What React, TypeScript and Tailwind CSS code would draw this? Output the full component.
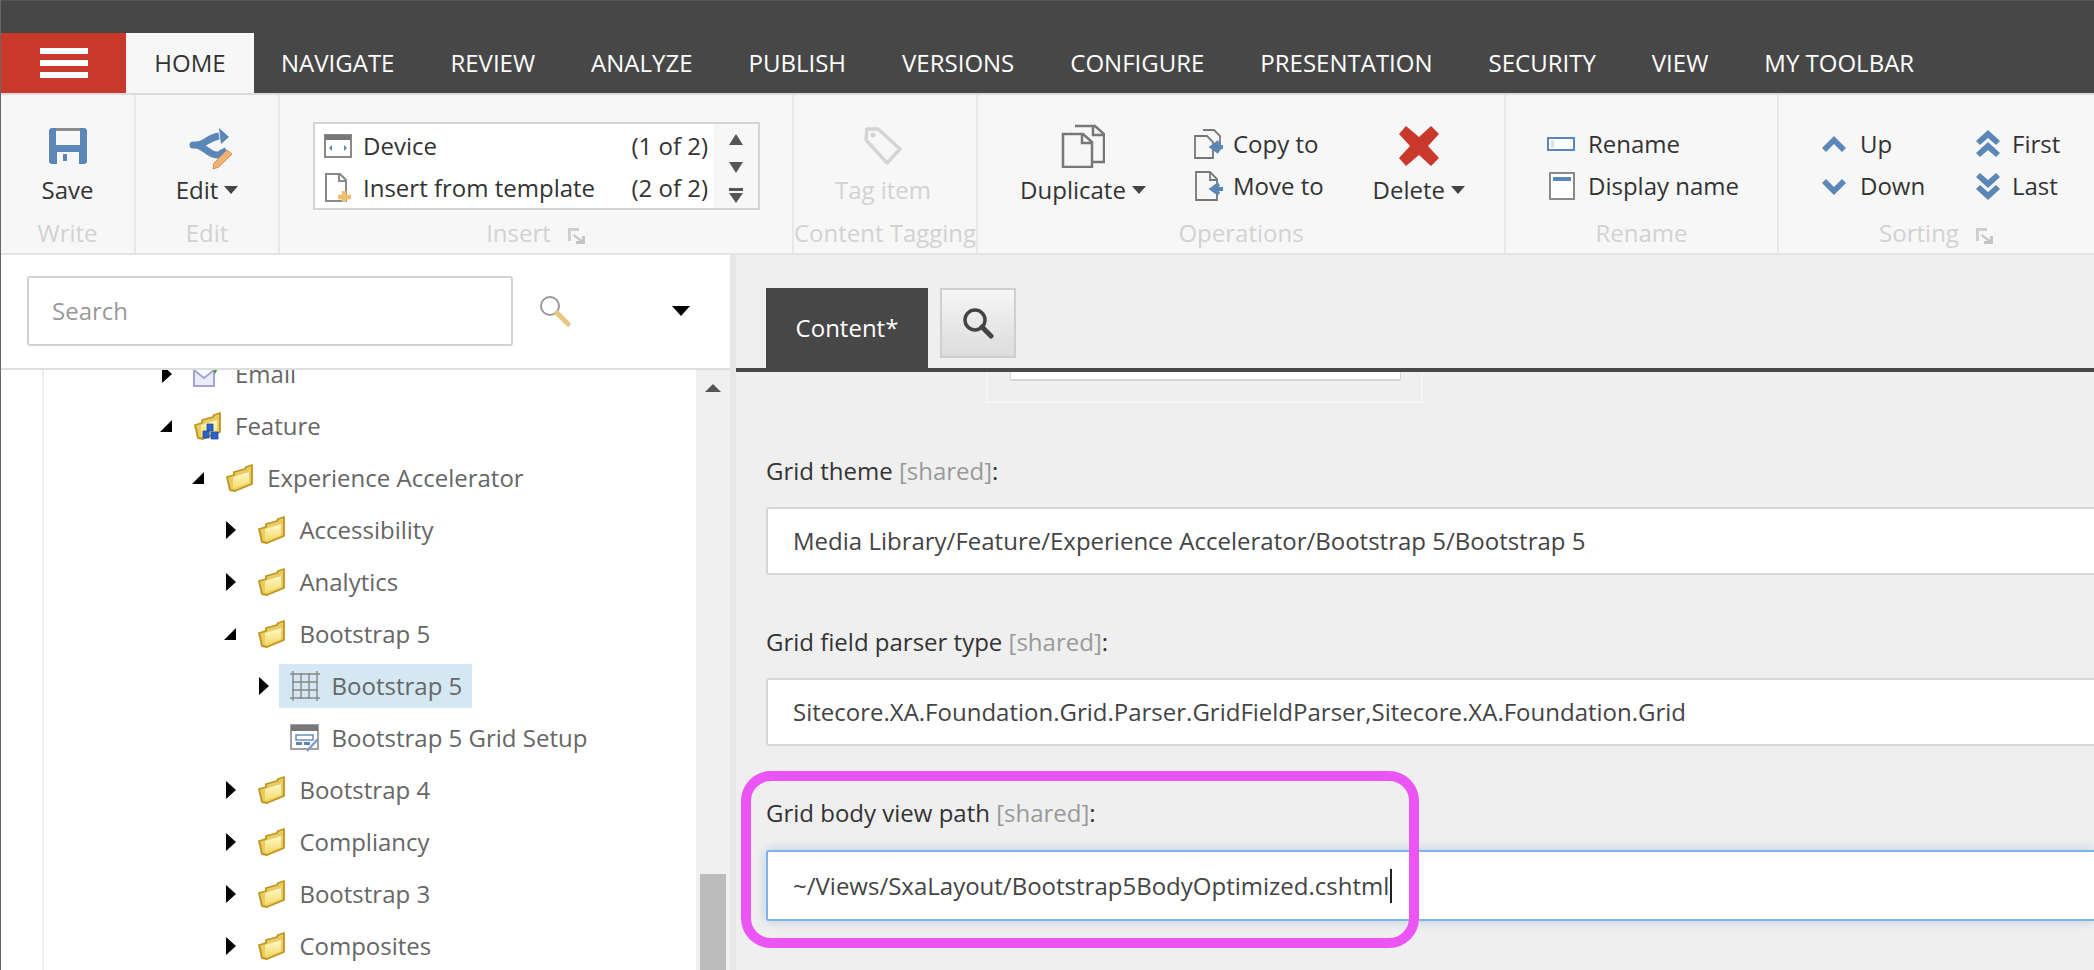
import type { ReactNode } from 'react';

const TABS = ['NAVIGATE', 'REVIEW', 'ANALYZE', 'PUBLISH', 'VERSIONS', 'CONFIGURE', 'PRESENTATION', 'SECURITY', 'VIEW', 'MY TOOLBAR'];

type TreeRow = { label: string; level: number; arrow?: 'open' | 'closed'; icon: 'folder' | 'feature' | 'email' | 'grid' | 'setup'; selected?: boolean };

const TREE: TreeRow[] = [
  { label: 'Email', level: 0, arrow: 'closed', icon: 'email' },
  { label: 'Feature', level: 0, arrow: 'open', icon: 'feature' },
  { label: 'Experience Accelerator', level: 1, arrow: 'open', icon: 'folder' },
  { label: 'Accessibility', level: 2, arrow: 'closed', icon: 'folder' },
  { label: 'Analytics', level: 2, arrow: 'closed', icon: 'folder' },
  { label: 'Bootstrap 5', level: 2, arrow: 'open', icon: 'folder' },
  { label: 'Bootstrap 5', level: 3, arrow: 'closed', icon: 'grid', selected: true },
  { label: 'Bootstrap 5 Grid Setup', level: 3, icon: 'setup' },
  { label: 'Bootstrap 4', level: 2, arrow: 'closed', icon: 'folder' },
  { label: 'Compliancy', level: 2, arrow: 'closed', icon: 'folder' },
  { label: 'Bootstrap 3', level: 2, arrow: 'closed', icon: 'folder' },
  { label: 'Composites', level: 2, arrow: 'closed', icon: 'folder' },
];

function Caret() {
  return <span className="inline-block ml-[6px] w-0 h-0 border-x-[7px] border-x-transparent border-t-[8px] border-t-[#444] align-middle" />;
}

function Launcher() {
  return (
    <svg width="18" height="16" viewBox="0 0 18 16" className="ml-[17px] mt-[6px]">
      <path d="M0 0h11v3H3v10H0z" fill="#cfcfcf" />
      <path d="M6 6l8 6V8h3v8H8v-3h4L5 8z" fill="#c4c4c4" />
    </svg>
  );
}

function Group({ width, label, launcher, children, grow }: { width?: string; label: string; launcher?: boolean; children: ReactNode; grow?: boolean }) {
  return (
    <div className={`${width ?? ''} ${grow ? 'flex-1' : 'shrink-0 border-r-2 border-[#e8e8e8]'} h-full flex flex-col overflow-hidden`}>
      <div className="h-[118px] relative flex">{children}</div>
      <div className="h-[40px] flex items-center justify-center text-[#d2d2d2] whitespace-nowrap">
        {label}
        {launcher && <Launcher />}
      </div>
    </div>
  );
}

function BigButton({ icon, label, caret, muted }: { icon: ReactNode; label: string; caret?: boolean; muted?: boolean }) {
  return (
    <div className="flex flex-col items-center pt-[26px]">
      <div className="h-[50px] flex items-center justify-center">{icon}</div>
      <div className={`h-[38px] flex items-center whitespace-nowrap ${muted ? 'text-[#d2d2d2]' : 'text-[#333]'}`}>
        {label}
        {caret && <Caret />}
      </div>
    </div>
  );
}

function SmallRow({ icon, label, iconWidth }: { icon: ReactNode; label: string; iconWidth: string }) {
  return (
    <div className="h-[42px] flex items-center whitespace-nowrap text-[#333]">
      <div className={`${iconWidth} flex items-center shrink-0`}>{icon}</div>
      {label}
    </div>
  );
}

function Folder({ children }: { children?: ReactNode }) {
  return (
    <svg width="29" height="28" viewBox="0 0 29 28">
      <defs>
        <linearGradient id="folder-front" x1="0" y1="0" x2="0" y2="1">
          <stop offset="0" stopColor="#fff8cf" />
          <stop offset="1" stopColor="#f4dc62" />
        </linearGradient>
      </defs>
      <path d="M2 13l7-2V8l11-3 1-2 6-2v19L10 27l-5-1z" fill="#e9cb62" stroke="#bf9420" strokeWidth="1.800" strokeLinejoin="round" />
      <path d="M8 13l16-5v11L8 25z" fill="url(#folder-front)" />
      {children}
    </svg>
  );
}

function TreeIcon({ name }: { name: TreeRow['icon'] }) {
  if (name === 'folder') return <Folder />;
  if (name === 'feature') {
    return (
      <Folder>
        <path d="M14 12h6v7h-6zM10 19h6v7h-6zM18 20h7v7h-7z" fill="#2a62c8" stroke="#1c4aa5" strokeWidth="0.800" />
      </Folder>
    );
  }
  if (name === 'email') {
    return (
      <svg width="28" height="28" viewBox="0 0 28 28">
        <path d="M1 7l10-5 10 5v19H1z" fill="#ecebfa" stroke="#a5a2d8" strokeWidth="2" />
        <path d="M1 10l10 8 10-8" fill="#f8f8ff" stroke="#a5a2d8" strokeWidth="1.800" />
        <path d="M20 10l6-8 2 2-6 10z" fill="#4f9a3c" />
      </svg>
    );
  }
  if (name === 'grid') {
    return (
      <svg width="30" height="30" viewBox="0 0 30 30" fill="none" stroke="#868686" strokeWidth="1.400">
        <path d="M3 0v30M11 2v26M19 2v26M27 0v30M0 3h30M2 11h26M2 19h26M0 27h30" />
      </svg>
    );
  }
  return (
    <svg width="30" height="28" viewBox="0 0 30 28">
      <rect x="1" y="1" width="27" height="24" fill="#fff" stroke="#8a8a8a" strokeWidth="1.600" />
      <rect x="1" y="1" width="27" height="6" fill="#777" />
      <rect x="6" y="11" width="17" height="5" fill="#fff" stroke="#5b86b8" strokeWidth="1.400" />
      <rect x="6" y="18" width="6" height="3" fill="#5b86b8" />
      <rect x="14" y="18" width="6" height="3" fill="#5b86b8" />
      <path d="M17 27l11-12" stroke="#7d9dc9" strokeWidth="2.400" />
    </svg>
  );
}

function TreeItem({ row }: { row: TreeRow }) {
  const inner = (
    <>
      <div className="w-[42px] shrink-0 flex items-center"><TreeIcon name={row.icon} /></div>
      <span>{row.label}</span>
    </>
  );
  return (
    <div className="h-[52px] flex items-center whitespace-nowrap" style={{ paddingLeft: 159 + row.level * 32.2 }}>
      <div className="w-[33px] shrink-0 flex items-center">
        {row.arrow === 'open' && <div className="w-0 h-0 border-l-[12px] border-l-transparent border-b-[12px] border-b-black" />}
        {row.arrow === 'closed' && <div className="ml-[2px] w-0 h-0 border-y-[9px] border-y-transparent border-l-[10px] border-l-black" />}
      </div>
      {row.selected ? (
        <div className="-ml-[11px] pl-[11px] pr-[10px] h-[44px] flex items-center bg-[#d4e8f4]">{inner}</div>
      ) : inner}
    </div>
  );
}

function Field({ name, value, focused }: { name: string; value: string; focused?: boolean }) {
  return (
    <div className="mb-[49px]">
      <div className="h-[36px] mb-[18px] ml-[30px] flex items-center whitespace-nowrap text-[#333]">
        {name}&nbsp;<span className="text-[#999]">[shared]</span>:
      </div>
      <div className={`ml-[30px] flex items-center pl-[25px] whitespace-nowrap text-[#444] bg-white border-y-2 border-l-2 rounded-l-[3px] ${focused ? 'mt-[19px] h-[71px] border-[#7fb2e6] shadow-[0_0_12px_rgba(90,140,200,0.35)]' : 'h-[68px] border-[#d6d6d6]'}`}>
        {value}
        {focused && <span className="w-[2px] h-[34px] bg-[#222] ml-[1px]" />}
      </div>
    </div>
  );
}

export default function App() {
  return (
    <div className="relative w-[2094px] h-[970px] overflow-hidden flex flex-col bg-white border-l border-[#666] font-['Open_Sans',sans-serif] text-[24px] leading-none">
      {/* Top bar */}
      <header className="h-[95px] shrink-0 bg-[#474747] flex items-end border-t border-[#555] border-b-2 border-b-[#dcdcdc]">
        <div className="w-[125px] h-[60px] bg-[#c9392b] flex flex-col items-center justify-center gap-[6px]">
          <div className="w-[48px] h-[6px] bg-white" />
          <div className="w-[48px] h-[6px] bg-white" />
          <div className="w-[48px] h-[6px] bg-white" />
        </div>
        <div className="w-[128px] h-[60px] bg-[#f7f7f7] flex items-center justify-center text-[#333]">HOME</div>
        <nav className="flex h-[60px] pl-[27px]">
          {TABS.map((t) => (
            <div key={t} className="flex items-center mr-[56px] text-white whitespace-nowrap">{t}</div>
          ))}
        </nav>
      </header>

      {/* Ribbon */}
      <div className="h-[160px] shrink-0 bg-[#f7f7f7] flex border-b-2 border-[#e4e4e4]">
        <Group width="w-[135px]" label="Write">
          <div className="w-full flex justify-center">
            <BigButton label="Save" icon={
              <svg width="38" height="36" viewBox="0 0 38 36">
                <path d="M3 0h32a3 3 0 0 1 3 3v30a3 3 0 0 1-3 3H3a3 3 0 0 1-3-3V3a3 3 0 0 1 3-3z" fill="#5b86b8" />
                <rect x="7" y="3" width="24" height="14" fill="#f7f7f7" />
                <rect x="7" y="0" width="24" height="3" fill="#8d8d8d" />
                <rect x="8" y="24" width="22" height="12" fill="#f7f7f7" />
                <rect x="14" y="26" width="4" height="7" fill="#5b86b8" />
              </svg>
            } />
          </div>
        </Group>
        <Group width="w-[144px]" label="Edit">
          <div className="w-full flex justify-center">
            <BigButton label="Edit" caret icon={
              <svg width="52" height="52" viewBox="0 0 52 52">
                <path d="M12 25h8" fill="none" stroke="#5b86b8" strokeWidth="7" strokeLinecap="round" />
                <path d="M16 25C24 25 26 18 38 16" fill="none" stroke="#5b86b8" strokeWidth="7" />
                <path d="M38 8l10 9-8 7z" fill="#5b86b8" />
                <path d="M16 25C24 27 28 35 36 35c4 0 7-2 5-6" fill="none" stroke="#5b86b8" strokeWidth="7" />
                <path d="M46 30l5 4-13 13-6 2 1-6z" fill="#eeb274" stroke="#e0934f" strokeWidth="1" />
              </svg>
            } />
          </div>
        </Group>
        <Group width="w-[514px]" label="Insert" launcher>
          <div className="ml-[33px] mt-[27px] w-[447px] h-[88px] flex bg-white border-2 border-[#d4d4d4] self-start">
            <div className="flex-1 pt-[1px] text-[#333]">
              {[
                { label: 'Device', n: '(1 of 2)', icon: (
                  <svg width="28" height="24" viewBox="0 0 28 24">
                    <rect x="1" y="1" width="26" height="22" fill="#fff" stroke="#8a8a8a" strokeWidth="2" />
                    <rect x="1" y="1" width="26" height="5" fill="#777" />
                    <path d="M8 11l-3 3 3 3zM20 11l3 3-3 3z" fill="#5b86b8" />
                  </svg>
                ) },
                { label: 'Insert from template', n: '(2 of 2)', icon: (
                  <svg width="28" height="30" viewBox="0 0 28 30" fill="none">
                    <path d="M2 1h14l6 6v21H2z" fill="#fff" stroke="#8a8a8a" strokeWidth="2" />
                    <path d="M15 1v7h7" stroke="#8a8a8a" strokeWidth="2" />
                    <path d="M14 24h13M20 18v11" stroke="#ecc06f" strokeWidth="4.500" />
                  </svg>
                ) },
              ].map((r) => (
                <div key={r.label} className="h-[42px] flex items-center whitespace-nowrap">
                  <div className="w-[48px] pl-[9px] shrink-0 flex items-center">{r.icon}</div>
                  <span className="flex-1">{r.label}</span>
                  <span className="pr-[6px]">{r.n}</span>
                </div>
              ))}
            </div>
            <div className="w-[44px] bg-[#f7f7f7] flex flex-col items-center pt-[10px] text-[#555]">
              <div className="w-0 h-0 border-x-[7px] border-x-transparent border-b-[11px] border-b-[#555]" />
              <div className="mt-[17px] w-0 h-0 border-x-[7px] border-x-transparent border-t-[11px] border-t-[#555]" />
              <div className="mt-[15px] w-[14px] h-[3px] bg-[#555]" />
              <div className="mt-[2px] w-0 h-0 border-x-[7px] border-x-transparent border-t-[10px] border-t-[#555]" />
            </div>
          </div>
        </Group>
        <Group width="w-[184px]" label="Content Tagging">
          <div className="w-full flex justify-center pr-[4px]">
            <BigButton label="Tag item" muted icon={
              <svg width="38" height="38" viewBox="0 0 38 38">
                <path d="M3 2h11l22 20-13 14L2 13z" fill="none" stroke="#d4d4d4" strokeWidth="3.500" strokeLinejoin="round" />
                <circle cx="9" cy="8" r="2.500" fill="#d4d4d4" />
              </svg>
            } />
          </div>
        </Group>
        <Group width="w-[528px]" label="Operations">
          <div className="ml-[42px] w-[126px] flex justify-center">
            <BigButton label="Duplicate" caret icon={
              <svg width="44" height="44" viewBox="0 0 44 44" fill="none" stroke="#777" strokeWidth="2.500">
                <path d="M14 2h20l9 8v28H32" />
                <path d="M32 2v9h11" />
                <path d="M2 10h20l9 8v25H2z" fill="#f7f7f7" />
                <path d="M21 10v9h10" />
              </svg>
            } />
          </div>
          <div className="ml-[47px] pt-[28px]">
            <SmallRow iconWidth="w-[40px]" label="Copy to" icon={
              <svg width="32" height="30" viewBox="0 0 32 30" fill="none" stroke="#777" strokeWidth="1.800">
                <path d="M10 1h11l6 6v14" />
                <path d="M2 7h12l6 6v16H2z" fill="#f7f7f7" />
                <path d="M30 18H21M26 13l-7 5 7 5" stroke="#5b86b8" strokeWidth="4" />
              </svg>
            } />
            <SmallRow iconWidth="w-[40px]" label="Move to" icon={
              <svg width="32" height="30" viewBox="0 0 32 30" fill="none" stroke="#777" strokeWidth="1.800">
                <path d="M3 1h14l7 7v21H3z" />
                <path d="M17 1v8h7" />
                <path d="M30 18H21M26 13l-7 5 7 5" stroke="#5b86b8" strokeWidth="4" />
              </svg>
            } />
          </div>
          <div className="ml-[47px] w-[96px] flex justify-center">
            <BigButton label="Delete" caret icon={
              <svg width="42" height="42" viewBox="0 0 42 42">
                <path d="M8 1l13 11L33 1l8 8-11 12 11 12-8 8-12-11L8 41l-7-8 11-12L1 9z" fill="#c9392b" />
              </svg>
            } />
          </div>
        </Group>
        <Group width="w-[273px]" label="Rename">
          <div className="ml-[41px] pt-[28px]">
            <SmallRow iconWidth="w-[41px]" label="Rename" icon={
              <svg width="28" height="14" viewBox="0 0 28 14">
                <rect x="1" y="1" width="26" height="12" fill="#fff" stroke="#5b86b8" strokeWidth="2" />
                <rect x="4" y="3.500" width="3" height="7" fill="#ddd" />
              </svg>
            } />
            <SmallRow iconWidth="w-[41px]" label="Display name" icon={
              <svg width="26" height="28" viewBox="0 0 26 28" className="ml-[2px]">
                <rect x="1" y="1" width="24" height="26" fill="#fff" stroke="#8a8a8a" strokeWidth="2" />
                <rect x="4" y="5" width="18" height="4" fill="#5b86b8" />
              </svg>
            } />
          </div>
        </Group>
        <Group grow label="Sorting" launcher>
          <div className="ml-[43px] pt-[28px] w-[154px]">
            <SmallRow iconWidth="w-[38px]" label="Up" icon={
              <svg width="24" height="17" viewBox="0 0 24 17"><path d="M12 0l12 12-4 4-8-8-8 8-4-4z" fill="#5b86b8" /></svg>
            } />
            <SmallRow iconWidth="w-[38px]" label="Down" icon={
              <svg width="24" height="17" viewBox="0 0 24 17"><path d="M12 17L0 5l4-4 8 8 8-8 4 4z" fill="#5b86b8" /></svg>
            } />
          </div>
          <div className="pt-[28px]">
            <SmallRow iconWidth="w-[36px]" label="First" icon={
              <svg width="24" height="28" viewBox="0 0 24 28"><path d="M12 0l12 11-4 4-8-7-8 7-4-4zM12 12l12 11-4 4-8-7-8 7-4-4z" fill="#5b86b8" /></svg>
            } />
            <SmallRow iconWidth="w-[36px]" label="Last" icon={
              <svg width="24" height="28" viewBox="0 0 24 28"><path d="M12 28L0 17l4-4 8 7 8-7 4 4zM12 16L0 5l4-4 8 7 8-7 4 4z" fill="#5b86b8" /></svg>
            } />
          </div>
        </Group>
      </div>

      {/* Body */}
      <div className="flex-1 min-h-0 flex">
        <aside className="w-[729px] shrink-0 flex flex-col bg-white">
          <div className="h-[115px] shrink-0 flex items-center border-b-2 border-[#dedede] pb-[1px] pl-[26px]">
            <div className="w-[486px] h-[70px] border-2 border-[#d2d2d2] rounded-[3px] flex items-center pl-[23px] text-[#999]">Search</div>
            <svg width="32" height="32" viewBox="0 0 32 32" fill="none" className="ml-[26px]">
              <circle cx="11" cy="11" r="9" stroke="#9a9a9a" strokeWidth="2" fill="#fff" />
              <path d="M18 18l11 11" stroke="#e9c67f" strokeWidth="5" strokeLinecap="round" />
            </svg>
            <div className="ml-[101px] w-0 h-0 border-x-[9px] border-x-transparent border-t-[10px] border-t-black" />
          </div>
          <div className="flex-1 min-h-0 flex overflow-hidden">
            <div className="ml-[41px] flex-1 min-w-0 border-l-2 border-[#eeeeee] overflow-hidden">
              <div className="-mt-[22px] -ml-[43px] text-[#666]">
                {TREE.map((row, i) => <TreeItem key={i} row={row} />)}
              </div>
            </div>
            <div className="w-[34px] shrink-0 bg-[#f0f0f0] flex flex-col items-center pt-[14px]">
              <div className="w-0 h-0 border-x-[8px] border-x-transparent border-b-[8px] border-b-[#555]" />
              <div className="mt-auto w-[26px] h-[96px] bg-[#bcbcbc]" />
            </div>
          </div>
        </aside>

        <main className="flex-1 min-w-0 flex flex-col bg-[#efefef] border-l-[6px] border-[#e7e7e7] overflow-hidden">
          <div className="h-[117px] shrink-0 pt-[33px] pl-[30px] flex items-start gap-[12px] border-b-4 border-[#474747]">
            <div className="w-[162px] h-[80px] bg-[#474747] text-white flex items-center justify-center">Content*</div>
            <div className="w-[76px] h-[70px] bg-gradient-to-b from-[#f6f6f6] to-[#dcdcdc] border-2 border-[#cfcfcf] flex items-center justify-center">
              <svg width="32" height="32" viewBox="0 0 32 32" fill="none" stroke="#444">
                <circle cx="13" cy="13" r="10" strokeWidth="3.500" />
                <path d="M20 20l9 9" strokeWidth="5" strokeLinecap="round" />
              </svg>
            </div>
          </div>
          <div className="ml-[250px] w-[437px] h-[31px] shrink-0 border-x-2 border-b-2 border-[#f5f5f5]">
            <div className="ml-[22px] w-[391px] h-[9px] bg-white border-x border-b-2 border-[#d6d6d6] rounded-b-[2px]" />
          </div>
          <div className="mt-[50px]">
            <Field name="Grid theme" value="Media Library/Feature/Experience Accelerator/Bootstrap 5/Bootstrap 5" />
            <Field name="Grid field parser type" value="Sitecore.XA.Foundation.Grid.Parser.GridFieldParser,Sitecore.XA.Foundation.Grid" />
            <Field name="Grid body view path" value="~/Views/SxaLayout/Bootstrap5BodyOptimized.cshtml" focused />
          </div>
        </main>
      </div>

      {/* Annotation */}
      <div className="absolute left-[740px] top-[771px] w-[678px] h-[177px] border-[10px] border-[#ea55f3] rounded-[30px] pointer-events-none" />
    </div>
  );
}
